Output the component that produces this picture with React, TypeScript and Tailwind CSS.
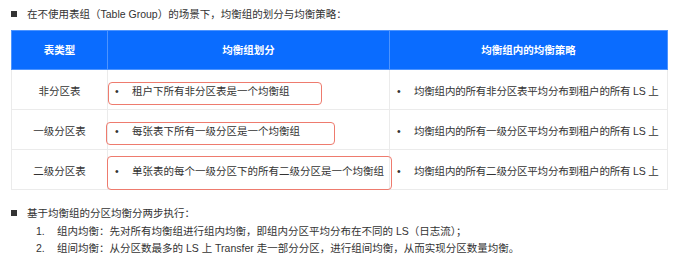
const rows = [
  {
    type: "非分区表",
    group: "租户下所有非分区表是一个均衡组",
    policy: "均衡组内的所有非分区表平均分布到租户的所有 LS 上",
  },
  {
    type: "一级分区表",
    group: "每张表下所有一级分区是一个均衡组",
    policy: "均衡组内的所有一级分区平均分布到租户的所有 LS 上",
  },
  {
    type: "二级分区表",
    group: "单张表的每个一级分区下的所有二级分区是一个均衡组",
    policy: "均衡组内的所有二级分区平均分布到租户的所有 LS 上",
  },
];

function Square() {
  return <span className="inline-block h-[6px] w-[6px] shrink-0 bg-[#333]" />;
}

export default function App() {
  return (
    <div
      className="h-[280px] w-[690px] overflow-hidden whitespace-nowrap bg-white pt-[7px] text-[#333]"
      style={{ fontFamily: '"Liberation Sans", "Noto Sans CJK SC", sans-serif' }}
    >
      {/* intro line */}
      <div className="flex h-[14px] items-center pl-[11px] text-[10.5px] leading-[14px]">
        <Square />
        <span className="ml-[10px]">在不使用表组（Table Group）的场景下，均衡组的划分与均衡策略：</span>
      </div>

      {/* table */}
      <div className="relative ml-[11px] mt-[9px] w-[656px]">
        <table className="w-full table-fixed border-collapse text-[10.5px]">
          <colgroup>
            <col className="w-[96px]" />
            <col className="w-[282px]" />
            <col className="w-[278px]" />
          </colgroup>
          <thead>
            <tr className="h-[39px] bg-[#0a6cff] font-bold text-white">
              <th className="border border-[#4d94ff] pt-[2px]">表类型</th>
              <th className="border border-[#4d94ff] pt-[2px]">均衡组划分</th>
              <th className="border border-[#4d94ff] pt-[2px]">均衡组内的均衡策略</th>
            </tr>
          </thead>
          <tbody>
            {rows.map((r) => (
              <tr key={r.type} className="h-[40px]">
                <td className="border border-[#ebebeb] pt-[4px] text-center">{r.type}</td>
                <td className="border border-[#ebebeb] pl-[7px] pt-[4px]">
                  <div className="flex">
                    <span className="w-[17px]">•</span>
                    <span>{r.group}</span>
                  </div>
                </td>
                <td className="border border-[#ebebeb] pl-[7px] pt-[4px]">
                  <div className="flex">
                    <span className="w-[17px]">•</span>
                    <span className="tracking-[-0.2px]">{r.policy}</span>
                  </div>
                </td>
              </tr>
            ))}
          </tbody>
        </table>

        {/* annotation boxes */}
        <div className="pointer-events-none absolute left-[97px] top-[52px] h-[23px] w-[214px] rounded-[4px] border border-[#ee7b6e]" />
        <div className="pointer-events-none absolute left-[95px] top-[92px] h-[23px] w-[229px] rounded-[4px] border border-[#ee7b6e]" />
        <div className="pointer-events-none absolute left-[96px] top-[126px] h-[34px] w-[285px] rounded-[4px] border border-[#ee7b6e]" />
      </div>

      {/* balancing steps */}
      <div className="mt-[16px] flex h-[14px] items-center pl-[11px] text-[10.5px] leading-[14px]">
        <Square />
        <span className="ml-[10px]">基于均衡组的分区均衡分两步执行：</span>
      </div>
      <div className="mt-[3px] flex h-[17px] items-center pl-[36px] text-[10.5px]">
        <span className="w-[21px]">1.</span>
        <span>组内均衡：先对所有均衡组进行组内均衡，即组内分区平均分布在不同的 LS（日志流）；</span>
      </div>
      <div className="flex h-[17px] items-center pl-[36px] text-[10.5px]">
        <span className="w-[21px]">2.</span>
        <span>组间均衡：从分区数最多的 LS 上 Transfer 走一部分分区，进行组间均衡，从而实现分区数量均衡。</span>
      </div>
    </div>
  );
}
